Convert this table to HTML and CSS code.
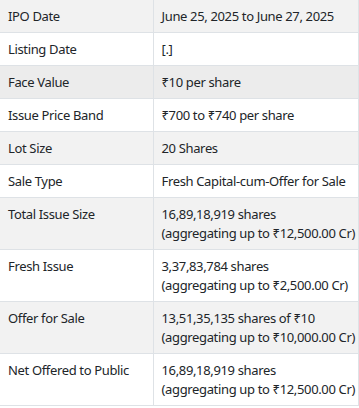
FILE: index.html
```html
<!DOCTYPE html>
<html lang="en">
<head>
<meta charset="utf-8">
<title>IPO Details</title>
<link rel="stylesheet" href="styles.css">
</head>
<body>
<table class="ipo-table">
  <colgroup><col class="col-label"><col class="col-value"></colgroup>
  <tbody>
    <tr class="shade"><td>IPO Date</td><td>June 25, 2025 to June 27, 2025</td></tr>
    <tr><td>Listing Date</td><td>[.]</td></tr>
    <tr class="shade dark"><td>Face Value</td><td>₹10 per share</td></tr>
    <tr><td>Issue Price Band</td><td>₹700 to ₹740 per share</td></tr>
    <tr class="shade"><td>Lot Size</td><td>20 Shares</td></tr>
    <tr><td>Sale Type</td><td>Fresh Capital-cum-Offer for Sale</td></tr>
    <tr class="shade"><td>Total Issue Size</td><td>16,89,18,919 shares<br>(aggregating up to ₹12,500.00 Cr)</td></tr>
    <tr><td>Fresh Issue</td><td>3,37,83,784 shares<br>(aggregating up to ₹2,500.00 Cr)</td></tr>
    <tr class="shade"><td>Offer for Sale</td><td>13,51,35,135 shares of ₹10<br>(aggregating up to ₹10,000.00 Cr)</td></tr>
    <tr><td>Net Offered to Public</td><td>16,89,18,919 shares<br>(aggregating up to ₹12,500.00 Cr)</td></tr>
  </tbody>
</table>
</body>
</html>
```

FILE: styles.css
```css
html, body {
  margin: 0;
  padding: 0;
  background: #ffffff;
}

.ipo-table {
  width: 359px;
  border-collapse: collapse;
  table-layout: fixed;
  font-family: "Noto Sans", "Open Sans", sans-serif;
  font-size: 13px;
  letter-spacing: -0.35px;
  color: #212529;
}

.col-label { width: 153px; }

.ipo-table td {
  padding: 7px 8px 6px 8px;
  line-height: 19px;
  vertical-align: top;
  border: 1px solid #dee2e6;
  text-align: left;
  white-space: nowrap;
}

.ipo-table tr:first-child td { border-top: none; }
.ipo-table td:first-child { border-left: none; }

.ipo-table tr.shade { background: #f2f2f2; }
.ipo-table tr.dark { background: #ececec; }
```
